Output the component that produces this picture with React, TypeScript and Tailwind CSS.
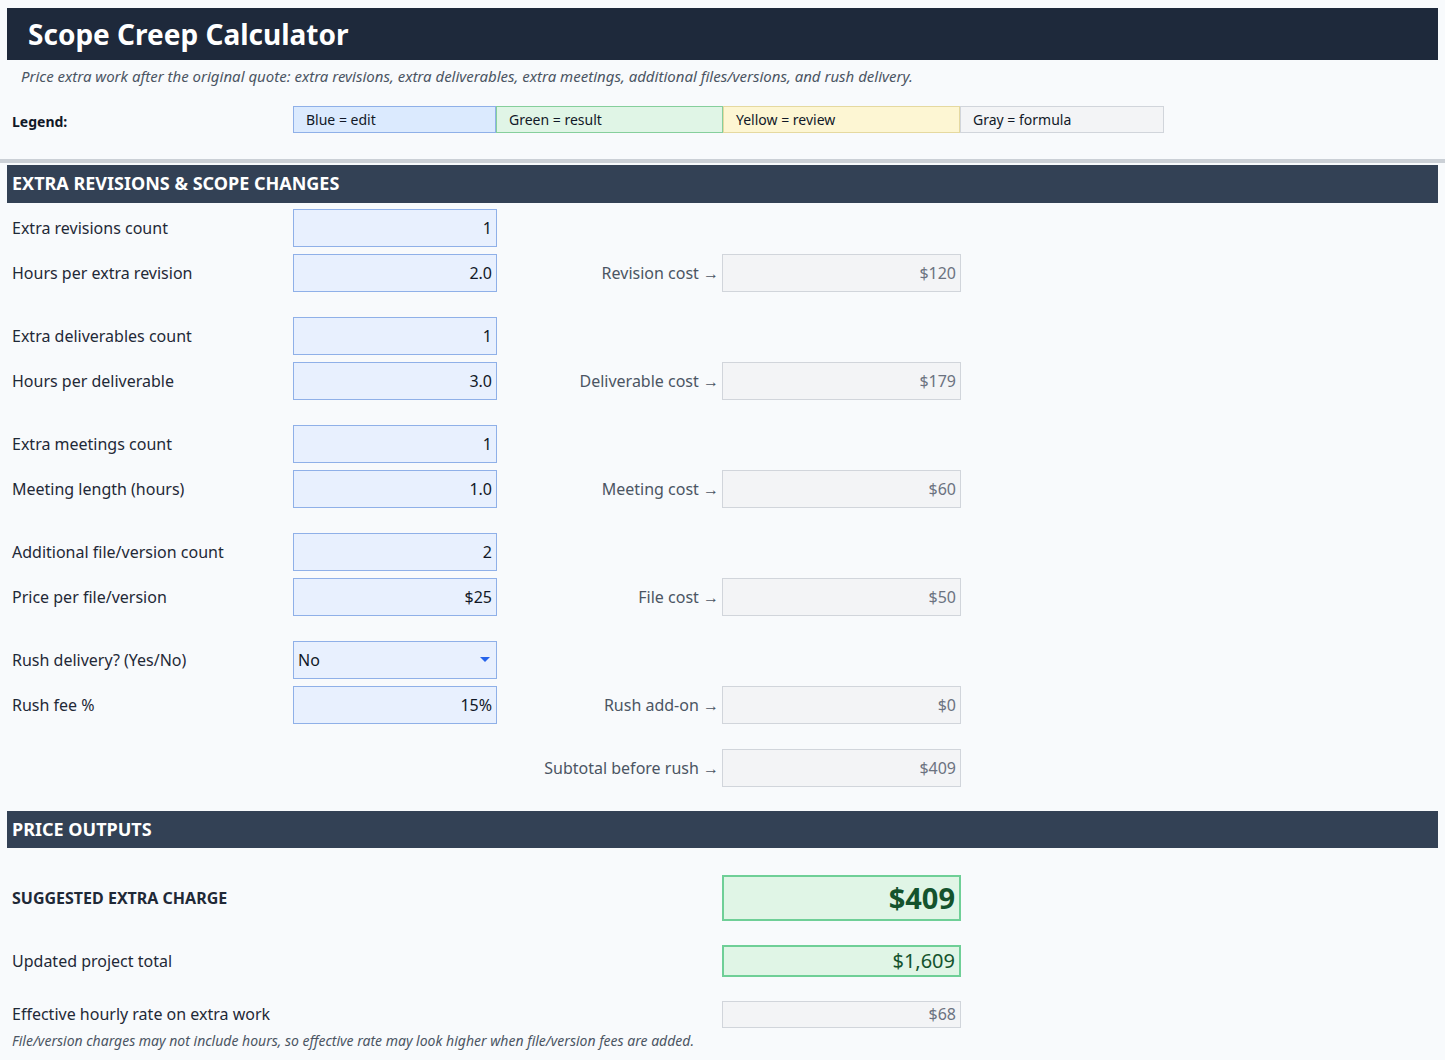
import { ChevronDown } from 'lucide-react';

const inputCls = 'h-[38px] w-[204px] border border-[#8fb0e8] bg-[#e8f0fe] flex items-center justify-end px-[4px] text-[16px] text-[#111827]';
const formulaCls = 'h-[38px] w-[239px] border border-[#d1d5db] bg-[#f3f4f6] flex items-center justify-end px-[4px] text-[16px] text-[#6b7280]';

function Row({ label, value, right, mt = 'mt-[7px]' }: { label: string; value: string; right?: [string, string]; mt?: string }) {
  return (
    <div className={`flex items-center ${mt}`}>
      <div className="w-[286px] pl-[5px] text-[16px] text-[#1f2937]">{label}</div>
      <div className={inputCls}>{value}</div>
      {right && (
        <>
          <div className="w-[225px] pr-[3px] text-right text-[16px] text-[#4b5563]">{right[0]} →</div>
          <div className={formulaCls}>{right[1]}</div>
        </>
      )}
    </div>
  );
}

export default function App() {
  return (
    <div className="min-h-[1060px] bg-[#f8fafc] pt-[8px] font-['Liberation_Sans',Arial,sans-serif]">
      <div className="mx-[7px] h-[52px] bg-[#1e293b] flex items-center pl-[21px]">
        <h1 className="text-[28px] font-bold text-white">Scope Creep Calculator</h1>
      </div>
      <p className="mx-[7px] pl-[14px] mt-[5px] text-[15px] italic text-[#4b5563]">
        Price extra work after the original quote: extra revisions, extra deliverables, extra meetings, additional files/versions, and rush delivery.
      </p>
      <div className="mx-[7px] mt-[18px] flex items-center">
        <div className="w-[286px] pl-[5px] pt-[4px] text-[14px] font-bold text-[#111827]">Legend:</div>
        <div className="flex h-[27px] text-[14px] text-[#111827]">
          <div className="w-[203px] border border-[#8fb0e8] bg-[#dbeafe] pl-[12px] flex items-center">Blue = edit</div>
          <div className="w-[227px] border border-[#86cf9c] bg-[#e0f5e6] pl-[12px] flex items-center">Green = result</div>
          <div className="w-[237px] border border-[#e5d9a0] bg-[#fdf6d3] pl-[12px] flex items-center">Yellow = review</div>
          <div className="w-[204px] border border-[#d1d5db] bg-[#f3f4f6] pl-[12px] flex items-center">Gray = formula</div>
        </div>
      </div>
      <div className="mt-[26px] h-[4px] bg-[#cbd0d6]" />
      <div className="mx-[7px] mt-[2px]">
        <div className="h-[38px] bg-[#334155] flex items-center pl-[5px] text-[18px] font-bold text-white">EXTRA REVISIONS &amp; SCOPE CHANGES</div>
        <Row label="Extra revisions count" value="1" mt="mt-[6px]" />
        <Row label="Hours per extra revision" value="2.0" right={['Revision cost', '$120']} />
        <Row label="Extra deliverables count" value="1" mt="mt-[25px]" />
        <Row label="Hours per deliverable" value="3.0" right={['Deliverable cost', '$179']} />
        <Row label="Extra meetings count" value="1" mt="mt-[25px]" />
        <Row label="Meeting length (hours)" value="1.0" right={['Meeting cost', '$60']} />
        <Row label="Additional file/version count" value="2" mt="mt-[25px]" />
        <Row label="Price per file/version" value="$25" right={['File cost', '$50']} />
        <div className="flex items-center mt-[25px]">
          <div className="w-[286px] pl-[5px] text-[16px] text-[#1f2937]">Rush delivery? (Yes/No)</div>
          <div className="h-[38px] w-[204px] border border-[#8fb0e8] bg-[#e8f0fe] flex items-center justify-between pl-[4px] pr-[6px] text-[16px] text-[#111827]">
            No
            <svg width="10" height="6" viewBox="0 0 10 6"><path d="M0 0h10L5 5z" fill="#2563eb" /></svg>
          </div>
        </div>
        <Row label="Rush fee %" value="15%" right={['Rush add-on', '$0']} />
        <div className="flex items-center mt-[25px]">
          <div className="w-[490px]" />
          <div className="w-[225px] pr-[3px] text-right text-[16px] text-[#4b5563]">Subtotal before rush →</div>
          <div className={formulaCls}>$409</div>
        </div>
        <div className="mt-[24px] h-[37px] bg-[#334155] flex items-center pl-[5px] text-[18px] font-bold text-white">PRICE OUTPUTS</div>
        <div className="flex items-center mt-[27px]">
          <div className="w-[715px] pl-[5px] text-[16px] font-bold text-[#1f2937]">SUGGESTED EXTRA CHARGE</div>
          <div className="h-[46px] w-[239px] border-2 border-[#6fcf97] bg-[#e0f5e6] flex items-center justify-end px-[4px] text-[29px] font-bold text-[#14532d]">$409</div>
        </div>
        <div className="flex items-center mt-[24px]">
          <div className="w-[715px] pl-[5px] text-[16px] text-[#1f2937]">Updated project total</div>
          <div className="h-[32px] w-[239px] border-2 border-[#6fcf97] bg-[#e0f5e6] flex items-center justify-end px-[4px] text-[20px] text-[#14532d]">$1,609</div>
        </div>
        <div className="flex items-center mt-[24px]">
          <div className="w-[715px] pl-[5px] text-[16px] text-[#1f2937]">Effective hourly rate on extra work</div>
          <div className="h-[27px] w-[239px] border border-[#d1d5db] bg-[#f3f4f6] flex items-center justify-end px-[4px] text-[16px] text-[#6b7280]">$68</div>
        </div>
        <p className="pl-[5px] mt-[2px] text-[14px] italic text-[#4b5563]">File/version charges may not include hours, so effective rate may look higher when file/version fees are added.</p>
      </div>
    </div>
  );
}
